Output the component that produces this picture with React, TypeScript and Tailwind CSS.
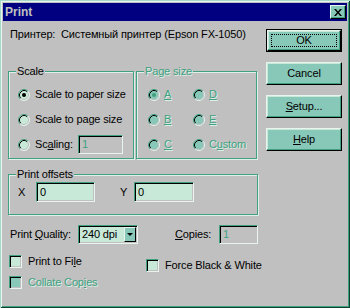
import React from 'react';

const FONT = "font-['Liberation_Sans','Arial',sans-serif]";

function Radio({ checked, disabled }: { checked?: boolean; disabled?: boolean }) {
  const fill = disabled ? '#88c8b8' : '#c8e8d8';
  const dot = disabled ? '#40a080' : '#000';
  return (
    <svg width="12" height="12" viewBox="0 0 12 12" className="shrink-0">
      <circle cx="6" cy="6" r="5.5" fill={fill} />
      <path d="M2.11 9.89 A5.5 5.5 0 0 1 9.89 2.11" stroke="#40a080" fill="none" />
      <path d="M9.89 2.11 A5.5 5.5 0 0 1 2.11 9.89" stroke="#e8f4ee" fill="none" />
      <path d="M2.82 9.18 A4.5 4.5 0 0 1 9.18 2.82" stroke="#000" fill="none" />
      <path d="M9.18 2.82 A4.5 4.5 0 0 1 2.82 9.18" stroke="#c0c0c0" fill="none" />
      {checked && <circle cx="6" cy="6" r="2" fill={dot} />}
    </svg>
  );
}

function Check({ disabled }: { disabled?: boolean }) {
  return (
    <div
      className={`w-[13px] h-[13px] shrink-0 border border-t-[#40a080] border-l-[#40a080] border-b-[#e8f4ee] border-r-[#e8f4ee] shadow-[inset_1px_1px_0_#000,inset_-1px_-1px_0_#c0c0c0] ${
        disabled ? 'bg-[#88c8b8]' : 'bg-[#c8e8d8]'
      }`}
    />
  );
}

function Field({ w, value, disabled }: { w: string; value: string; disabled?: boolean }) {
  return (
    <div
      className={`${w} shrink-0 flex items-center pl-[3px] border border-t-[#40a080] border-l-[#40a080] border-b-[#e8f4ee] border-r-[#e8f4ee] shadow-[inset_1px_1px_0_#000,inset_-1px_-1px_0_#c0c0c0] ${
        disabled ? 'bg-[#c0c0c0] text-[#40a080]' : 'bg-[#c8e8d8] text-black'
      }`}
    >
      {value}
    </div>
  );
}

function Btn({ children, def }: { children: React.ReactNode; def?: boolean }) {
  const inner = (
    <div className="relative w-full h-full flex items-center justify-center bg-[#88c8b8] border border-t-[#e8f4ee] border-l-[#e8f4ee] border-r-black border-b-black shadow-[inset_-1px_-1px_0_#40a080,inset_1px_1px_0_#c8e8d8]">
      {children}
      {def && <div className="absolute inset-[3px] border border-dotted border-black" />}
    </div>
  );
  if (def) {
    return <div className="w-[76px] h-[23px] border border-black">{inner}</div>;
  }
  return <div className="w-[76px] h-[23px]">{inner}</div>;
}

const dis = 'text-[#40a080] [text-shadow:1px_1px_0_#dcefe6]';

function Group({
  label,
  disabled,
  className,
  children,
}: {
  label: string;
  disabled?: boolean;
  className: string;
  children: React.ReactNode;
}) {
  return (
    <div
      className={`relative shrink-0 border border-[#40a080] shadow-[1px_1px_0_#e0f0e8,inset_1px_1px_0_#e0f0e8] ${className}`}
    >
      <div
        className={`absolute left-[7px] top-[-7px] px-[1px] bg-[#c0c0c0] leading-[13px] ${disabled ? dis : ''}`}
      >
        {label}
      </div>
      {children}
    </div>
  );
}

export default function App() {
  return (
    <div
      className={`${FONT} text-[11px] leading-[13px] tracking-[-0.15px] whitespace-nowrap text-black w-[350px] h-[308px] overflow-hidden bg-[#c0c0c0] p-[3px] flex flex-col shadow-[inset_1px_1px_0_#a8d8c8,inset_-1px_-1px_0_#104030,inset_2px_2px_0_#e8f4ee,inset_-2px_-2px_0_#40a080]`}
    >
      {/* Title bar */}
      <div className="h-[18px] shrink-0 bg-[#000080] flex items-center justify-between pl-[2px] pr-[1px]">
        <span className="font-bold text-[12px] tracking-normal text-[#c0c0c0]">Print</span>
        <div className="w-[16px] h-[14px] bg-[#88c8b8] border border-t-[#e8f4ee] border-l-[#e8f4ee] border-r-black border-b-black shadow-[inset_-1px_-1px_0_#40a080] flex items-center justify-center">
          <svg width="8" height="7" viewBox="0 0 8 7">
            <path d="M0 0h2l2 2.5L6 0h2L5 3.5L8 7H6L4 4.5L2 7H0l3-3.5z" fill="#000" />
          </svg>
        </div>
      </div>

      <div className="flex">
        {/* Left column */}
        <div className="ml-[5px] w-[250px] shrink-0 flex flex-col">
          <div className="mt-[7px] pl-[2px] whitespace-pre">Принтер:  Системный принтер (Epson FX-1050)</div>

          <div className="mt-[30px] flex">
            <Group label="Scale" className="w-[126px] h-[88px]">
              <div className="flex flex-col pl-[9px] pt-[16px] gap-[12px]">
                <div className="flex items-center gap-[5px] h-[13px]">
                  <Radio checked />
                  <span>Scale to paper size</span>
                </div>
                <div className="flex items-center gap-[5px] h-[13px]">
                  <Radio />
                  <span>Scale to page size</span>
                </div>
                <div className="flex items-center gap-[5px] h-[13px]">
                  <Radio />
                  <span className="w-[38px]">
                    Sc<u>a</u>ling:
                  </span>
                  <Field w="w-[45px] h-[19px]" value="1" disabled />
                </div>
              </div>
            </Group>
            <Group label="Page size" disabled className="ml-[2px] w-[121px] h-[88px]">
              <div className="grid grid-cols-[45px_60px] pl-[11px] pt-[16px] gap-y-[12px]">
                {[
                  ['A', 'D'],
                  ['B', 'E'],
                  ['C', 'Custom'],
                ].map(([a, b], i) => (
                  <React.Fragment key={i}>
                    <div className="flex items-center gap-[4px] h-[13px]">
                      <Radio disabled checked={i === 0} />
                      <span className={dis}>
                        <u>{a}</u>
                      </span>
                    </div>
                    <div className="flex items-center gap-[4px] h-[13px]">
                      <Radio disabled />
                      <span className={dis}>
                        {b === 'Custom' ? (
                          <>
                            C<u>u</u>stom
                          </>
                        ) : (
                          <u>{b}</u>
                        )}
                      </span>
                    </div>
                  </React.Fragment>
                ))}
              </div>
            </Group>
          </div>

          <Group label="Print offsets" className="mt-[15px] w-[250px] h-[41px]">
            <div className="flex items-center pt-[7px] pl-[9px]">
              <span className="w-[18px]">X</span>
              <Field w="w-[59px] h-[20px]" value="0" />
              <span className="ml-[25px] w-[14px]">Y</span>
              <Field w="w-[60px] h-[20px]" value="0" />
            </div>
          </Group>

          <div className="mt-[10px] flex items-center h-[19px]">
            <span className="pl-[2px] w-[70px]">
              Print <u>Q</u>uality:
            </span>
            <div className="w-[60px] h-[19px] shrink-0 flex items-center justify-between pl-[3px] pr-[1px] bg-[#c8e8d8] border border-t-[#40a080] border-l-[#40a080] border-b-[#e8f4ee] border-r-[#e8f4ee] shadow-[inset_1px_1px_0_#000,inset_-1px_-1px_0_#c0c0c0]">
              <span>240 dpi</span>
              <div className="w-[12px] h-[15px] bg-[#88c8b8] border border-t-[#e8f4ee] border-l-[#e8f4ee] border-r-black border-b-black flex items-center justify-center">
                <svg width="6" height="4" viewBox="0 0 6 4">
                  <path d="M0 0h6L3 3z" fill="#000" />
                </svg>
              </div>
            </div>
            <span className="ml-[37px] w-[44px]">
              <u>C</u>opies:
            </span>
            <Field w="w-[39px] h-[19px]" value="1" disabled />
          </div>

          <div className="flex">
            <div className="w-[138px] shrink-0 flex flex-col pl-[1px]">
              <div className="mt-[11px] flex items-center gap-[6px]">
                <Check />
                <span>
                  Print to Fi<u>l</u>e
                </span>
              </div>
              <div className="mt-[8px] flex items-center gap-[6px]">
                <Check disabled />
                <span className={dis}>
                  Collate Cop<u>i</u>es
                </span>
              </div>
            </div>
            <div className="mt-[15px] flex items-center gap-[6px] h-[13px]">
              <Check />
              <span>Force Black &amp; White</span>
            </div>
          </div>
        </div>

        {/* Right column */}
        <div className="ml-[8px] mt-[8px] flex flex-col gap-[10px]">
          <Btn def>OK</Btn>
          <Btn>Cancel</Btn>
          <Btn>
            <span>
              <u>S</u>etup...
            </span>
          </Btn>
          <Btn>
            <span>
              <u>H</u>elp
            </span>
          </Btn>
        </div>
      </div>
    </div>
  );
}
